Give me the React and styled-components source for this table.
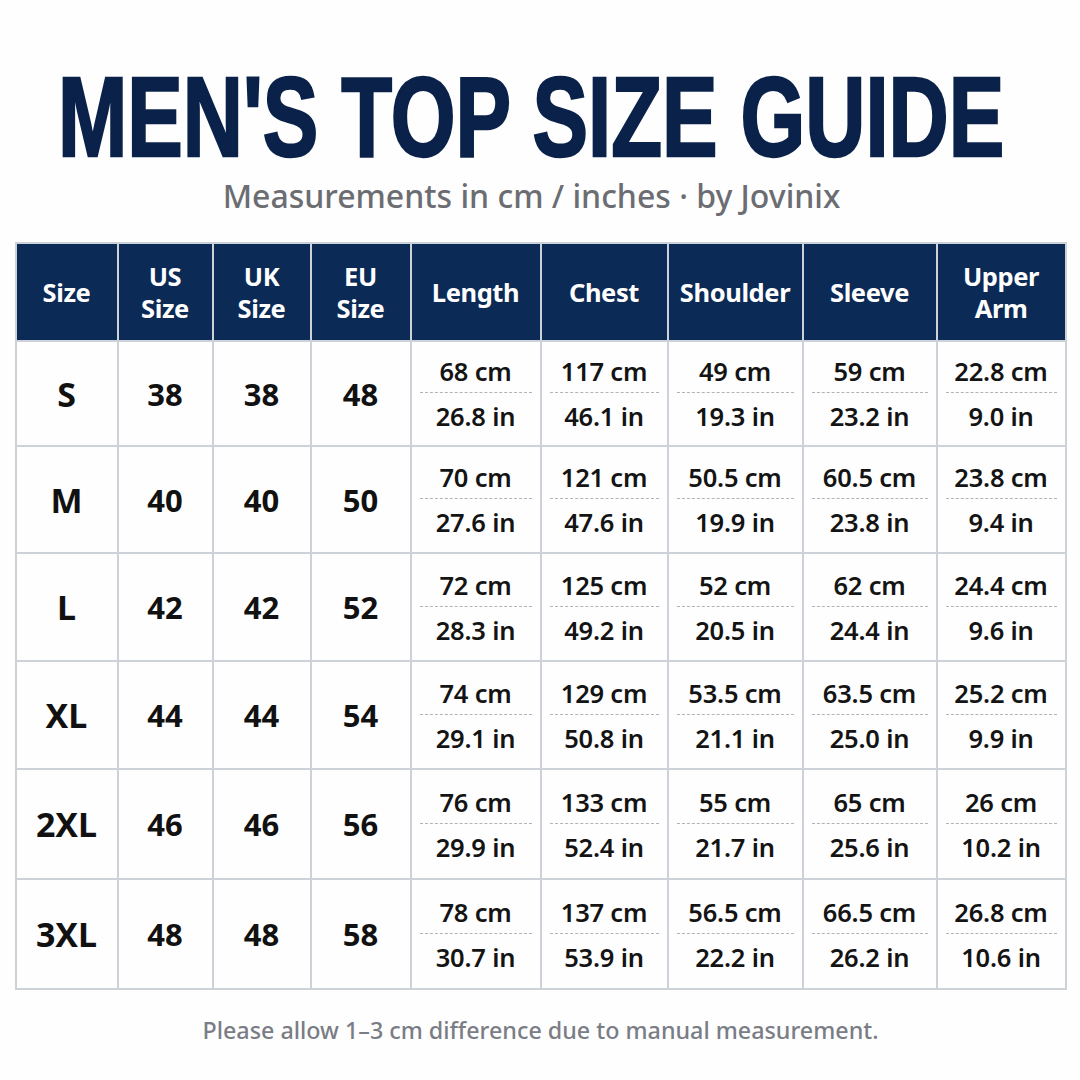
import React from 'react';
import styled, { createGlobalStyle } from 'styled-components';

const GlobalStyle = createGlobalStyle`
  html, body {
    margin: 0;
    padding: 0;
    background: #fefefe;
  }
  body {
    font-family: "Noto Sans", "Open Sans", sans-serif;
  }
`;

const columns = [
  { label: ['Size'], width: 102 },
  { label: ['US', 'Size'], width: 95 },
  { label: ['UK', 'Size'], width: 98 },
  { label: ['EU', 'Size'], width: 100 },
  { label: ['Length'], width: 130 },
  { label: ['Chest'], width: 127 },
  { label: ['Shoulder'], width: 135 },
  { label: ['Sleeve'], width: 134 },
  { label: ['Upper', 'Arm'], width: 129 },
];

const rows = [
  { size: 'S', us: 38, uk: 38, eu: 48, m: [['68', '26.8'], ['117', '46.1'], ['49', '19.3'], ['59', '23.2'], ['22.8', '9.0']] },
  { size: 'M', us: 40, uk: 40, eu: 50, m: [['70', '27.6'], ['121', '47.6'], ['50.5', '19.9'], ['60.5', '23.8'], ['23.8', '9.4']] },
  { size: 'L', us: 42, uk: 42, eu: 52, m: [['72', '28.3'], ['125', '49.2'], ['52', '20.5'], ['62', '24.4'], ['24.4', '9.6']] },
  { size: 'XL', us: 44, uk: 44, eu: 54, m: [['74', '29.1'], ['129', '50.8'], ['53.5', '21.1'], ['63.5', '25.0'], ['25.2', '9.9']] },
  { size: '2XL', us: 46, uk: 46, eu: 56, m: [['76', '29.9'], ['133', '52.4'], ['55', '21.7'], ['65', '25.6'], ['26', '10.2']] },
  { size: '3XL', us: 48, uk: 48, eu: 58, m: [['78', '30.7'], ['137', '53.9'], ['56.5', '22.2'], ['66.5', '26.2'], ['26.8', '10.6']] },
];

const rowHeights = [105, 107, 108, 108, 110, 110];

const App = () => {
  return (
    <Page>
      <GlobalStyle />
      <Header>
        <Title>MEN'S TOP SIZE GUIDE</Title>
        <Subtitle>Measurements in cm / inches · by Jovinix</Subtitle>
      </Header>
      <Table>
        <colgroup>
          {columns.map((c, i) => (
            <col key={i} style={{ width: c.width }} />
          ))}
        </colgroup>
        <thead>
          <tr>
            {columns.map((c, i) => (
              <HeadCell key={i}>
                {c.label.map((l, j) => (
                  <div key={j}>{l}</div>
                ))}
              </HeadCell>
            ))}
          </tr>
        </thead>
        <tbody>
          {rows.map((r, i) => (
            <tr key={r.size} style={{ height: rowHeights[i] }}>
              <SizeCell>{r.size}</SizeCell>
              <NumCell>{r.us}</NumCell>
              <NumCell>{r.uk}</NumCell>
              <NumCell>{r.eu}</NumCell>
              {r.m.map(([cm, inch], j) => (
                <MeasureCell key={j}>
                  <Measure>
                    <Value>{cm} cm</Value>
                    <Divider />
                    <Value>{inch} in</Value>
                  </Measure>
                </MeasureCell>
              ))}
            </tr>
          ))}
        </tbody>
      </Table>
      <Note>Please allow 1–3 cm difference due to manual measurement.</Note>
    </Page>
  );
};

export default App;

const Page = styled.div`
  width: 1080px;
  height: 1080px;
  box-sizing: border-box;
  padding: 67px 14px 0 15px;
  display: flex;
  flex-direction: column;
  align-items: center;
  overflow: hidden;
`;

const Header = styled.header`
  display: flex;
  flex-direction: column;
  align-items: center;
  padding-right: 18px;
`;

const Title = styled.h1`
  margin: 0;
  font-family: "Liberation Sans", Arial, sans-serif;
  font-weight: 700;
  font-size: 114px;
  line-height: 100px;
  color: #0a2149;
  -webkit-text-stroke: 2.5px #0a2149;
  white-space: nowrap;
  transform: scaleX(0.73);
`;

const Subtitle = styled.div`
  margin-top: 9px;
  font-size: 32px;
  line-height: 40px;
  color: #6b6d72;
  font-weight: 500;
`;

const Table = styled.table`
  margin-top: 26px;
  width: 1051px;
  border-collapse: collapse;
  table-layout: fixed;
  border: 2px solid #cdd2d9;

  td, th {
    border: 2px solid #cdd2d9;
    text-align: center;
    vertical-align: middle;
    padding: 0;
  }
`;

const HeadCell = styled.th`
  height: 96px;
  background: #0c2a56;
  color: #ffffff;
  font-size: 25.5px;
  font-weight: 700;
  line-height: 32px;
  letter-spacing: -0.4px;
`;

const SizeCell = styled.td`
  font-size: 34px;
  font-weight: 700;
  color: #111;
`;

const NumCell = styled.td`
  font-size: 31px;
  font-weight: 700;
  color: #111;
`;

const MeasureCell = styled.td`
  padding: 0 8px !important;
`;

const Measure = styled.div`
  display: flex;
  flex-direction: column;
  align-items: stretch;
`;

const Value = styled.div`
  font-size: 25.5px;
  font-weight: 650;
  line-height: 36px;
  color: #141414;
  letter-spacing: -0.2px;
`;

const Divider = styled.div`
  margin: 3px 0 5px;
  border-top: 1px dashed #b0b4ba;
`;

const Note = styled.div`
  margin-top: 24px;
  font-size: 23.3px;
  color: #7a7d85;
  font-weight: 500;
`;
